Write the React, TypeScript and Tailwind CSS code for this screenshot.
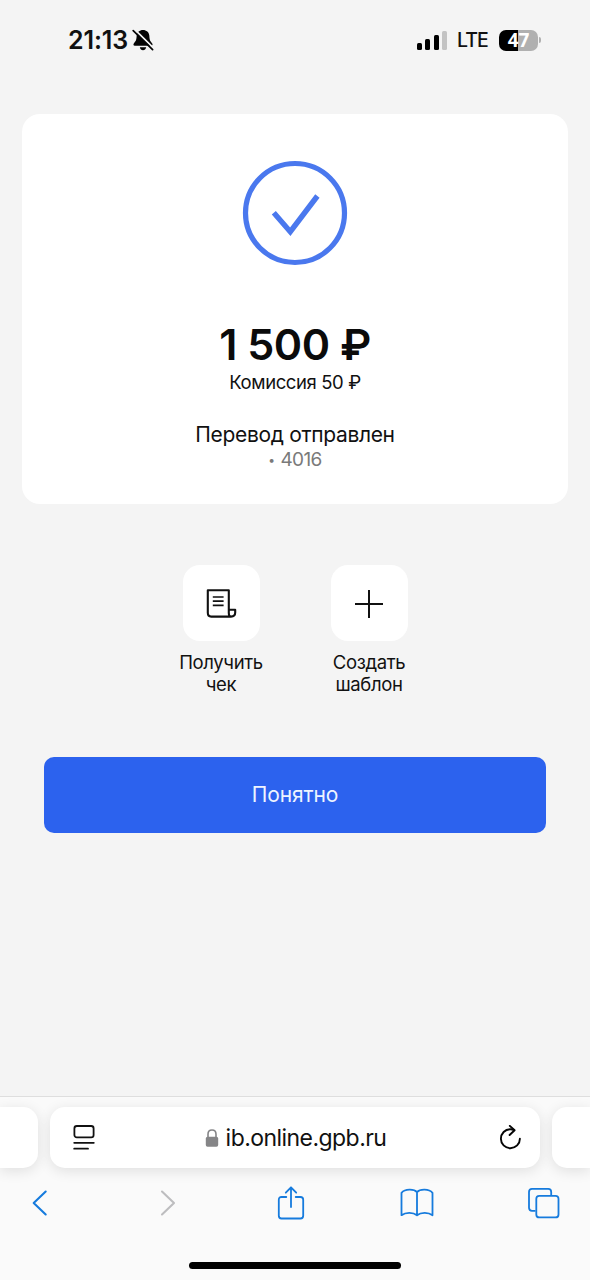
import type { ReactNode } from 'react';

function StatusBar() {
  return (
    <header className="flex h-[80px] items-center justify-between pr-[49px] pl-[68px]">
      <div className="flex items-center gap-[4px]">
        <span className="pt-px text-[25px] leading-none font-semibold tracking-[-0.1px]">21:13</span>
        <svg className="h-[22px] w-[22px]" viewBox="0 0 22 22" aria-hidden="true">
          <path
            d="M11 1C7.6 1 5 3.2 4.7 6.6C4.4 11 4 12 2 14.2C1 15.3 1.4 16.8 2.8 16.8H19.2C20.6 16.8 21 15.3 20 14.2C18 12 17.6 11 17.3 6.6C17 3.2 14.4 1 11 1ZM7.8 18.2H14.2C13.8 20 12.6 21.2 11 21.2C9.4 21.2 8.2 20 7.8 18.2Z"
            fill="#050505"
          />
          <path d="M2.8 0.6L22 19.6" stroke="#f4f4f4" strokeWidth="1.8" />
          <path d="M1.2 1.6L20.6 20.6" stroke="#050505" strokeWidth="1.7" strokeLinecap="round" />
        </svg>
      </div>

      <div className="flex items-center">
        <div className="flex h-[19px] items-end gap-[3.3px]">
          <span className="h-[7px] w-[5px] rounded-[1.5px] bg-black" />
          <span className="h-[11px] w-[5px] rounded-[1.5px] bg-black" />
          <span className="h-[15px] w-[5px] rounded-[1.5px] bg-black" />
          <span className="h-[19px] w-[5px] rounded-[1.5px] bg-[#c3c3c3]" />
        </div>
        <span className="ml-[10px] w-[31px] pt-px text-[19.5px] leading-none font-medium tracking-[-0.9px] whitespace-nowrap">
          LTE
        </span>
        <div className="ml-[11px] flex h-[21px] w-[39px] items-center justify-center rounded-[7px] bg-linear-to-r from-black from-[48%] to-[#b0b0b0] to-[48%] font-['Open_Sans','Noto_Sans',sans-serif] text-[19px] leading-none font-bold text-white">
          47
        </div>
        <span className="ml-[1px] h-[6px] w-[2px] rounded-r-full bg-[#b0b0b0]" />
      </div>
    </header>
  );
}

function ResultCard() {
  return (
    <section className="mx-[22px] mt-[34px] flex h-[390px] flex-col items-center rounded-[18px] bg-white pt-[46px]">
      <svg className="h-[106px] w-[106px]" viewBox="0 0 106 106" fill="none" aria-hidden="true">
        <circle cx="53" cy="53" r="49.5" stroke="#4a78ee" strokeWidth="5.2" />
        <path d="M31.8 52.8L48.3 71.7L75.4 36" stroke="#4a78ee" strokeWidth="5.4" />
      </svg>
      <h1 className="mt-[53px] text-[43px] leading-[50px] font-semibold tracking-[-0.5px] whitespace-nowrap text-[#0b0b0b]">
        1 500 ₽
      </h1>
      <p className="mt-[1px] text-[18.5px] leading-[24px] tracking-[-0.4px] whitespace-nowrap">Комиссия 50 ₽</p>
      <p className="mt-[28px] text-[21px] leading-[26px] tracking-[-0.33px] whitespace-nowrap">Перевод отправлен</p>
      <p className="mt-px flex items-center gap-[6px] text-[19px] leading-[22px] tracking-[-0.6px] text-[#7a7a7a]">
        <span className="text-[12px]">•</span>
        4016
      </p>
    </section>
  );
}

function ActionTile({ icon, children }: { icon: ReactNode; children: ReactNode }) {
  return (
    <button type="button" className="flex w-[148px] flex-col items-center">
      <span className="flex h-[76px] w-[77px] items-center justify-center rounded-[17px] bg-white">{icon}</span>
      <span className="mt-[10px] text-[18.5px] leading-[22px] tracking-[-0.35px]">{children}</span>
    </button>
  );
}

function ReceiptIcon() {
  return (
    <svg className="mt-px h-[32px] w-[32px]" viewBox="0 0 32 32" fill="none" stroke="#111" strokeWidth="2.1" strokeLinejoin="round" aria-hidden="true">
      <path d="M23.8 21.8V2.2H2.8V24.8C2.8 27.2 4.2 28.6 6.2 28.6H26C28.8 28.6 30.2 27 30.2 24.6V21.8H23.8V25C23.8 27 24.8 28.6 26 28.6" />
      <path d="M7.8 9H18.6M7.8 13.1H18.6M7.8 17.3H18.6" strokeWidth="1.7" />
    </svg>
  );
}

function PlusIcon() {
  return (
    <svg className="mt-[2px] h-[28px] w-[28px]" viewBox="0 0 28 28" fill="none" stroke="#111" strokeWidth="2" aria-hidden="true">
      <path d="M14 0V28M0 14H28" />
    </svg>
  );
}

function AddressBar() {
  return (
    <div className="flex gap-[12px] pt-[10px]">
      <div className="h-[61px] w-[38px] shrink-0 rounded-r-[15px] bg-white shadow-[0_3px_14px_rgba(0,0,0,0.11)]" />
      <div className="flex h-[61px] w-[490px] shrink-0 items-center justify-between rounded-[15px] bg-white pr-[18px] pl-[23px] shadow-[0_3px_14px_rgba(0,0,0,0.11)]">
        <svg className="h-[27px] w-[22px]" viewBox="0 0 22 27" fill="none" stroke="#111" strokeWidth="1.8" aria-hidden="true">
          <rect x="1.4" y="2" width="19.2" height="11.4" rx="2.4" />
          <path d="M1.2 18.8H20.8M1.2 24.7H15" strokeLinecap="round" />
        </svg>
        <div className="mr-[2px] flex items-center gap-[7px]">
          <svg className="h-[18px] w-[14px]" viewBox="0 0 14 18" fill="none" aria-hidden="true">
            <path d="M3 9V5.2C3 2.5 4.7 1 7 1C9.3 1 11 2.5 11 5.2V9" stroke="#858587" strokeWidth="1.6" />
            <rect x="0.8" y="7.8" width="12.4" height="10" rx="1.8" fill="#858587" />
          </svg>
          <span className="pt-[2px] text-[23px] leading-none tracking-[-0.55px]">ib.online.gpb.ru</span>
        </div>
        <svg className="h-[26px] w-[24px]" viewBox="0 0 24 26" fill="none" stroke="#050505" strokeWidth="1.9" strokeLinecap="round" strokeLinejoin="round" aria-hidden="true">
          <path d="M16 5C14.8 4.5 13.6 4.2 12.4 4.2C7 4.2 2.9 8.5 2.9 13.8C2.9 19 7 23.2 12.4 23.2C17.7 23.2 21.9 19 21.9 13.8" />
          <path d="M11.8 0.9L16.6 5.3L11.6 10" />
        </svg>
      </div>
      <div className="h-[61px] w-[38px] shrink-0 rounded-l-[15px] bg-white shadow-[0_3px_14px_rgba(0,0,0,0.11)]" />
    </div>
  );
}

function Toolbar() {
  return (
    <nav
      className="flex h-[70px] items-center justify-between pr-[30px] pl-[31px] text-[#167bdd]"
      aria-label="Safari"
    >
      <svg className="h-[28px] w-[18px]" viewBox="0 0 18 28" fill="none" stroke="currentColor" strokeWidth="2.1" strokeLinecap="round" strokeLinejoin="round">
        <path d="M14.7 2.5L2.7 14L14.7 25.5" />
      </svg>
      <svg className="ml-[17px] h-[28px] w-[18px] text-[#bdbdbf]" viewBox="0 0 18 28" fill="none" stroke="currentColor" strokeWidth="2.1" strokeLinecap="round" strokeLinejoin="round">
        <path d="M3 2.5L15 14L3 25.5" />
      </svg>
      <svg className="ml-[7px] h-[36px] w-[28px]" viewBox="0 0 28 36" fill="none" stroke="currentColor" strokeWidth="1.8" strokeLinecap="round" strokeLinejoin="round">
        <path d="M9.3 12H4.5C2.8 12 1.8 13 1.8 14.7V30.8C1.8 32.5 2.8 33.5 4.5 33.5H23.5C25.2 33.5 26.2 32.5 26.2 30.8V14.7C26.2 13 25.2 12 23.5 12H18.7" />
        <path d="M14 22V2.5M8.8 7.7L14 2.3L19.2 7.7" />
      </svg>
      <svg className="ml-[2px] h-[30px] w-[34px]" viewBox="0 0 34 30" fill="none" stroke="currentColor" strokeWidth="1.8" strokeLinejoin="round">
        <path d="M17 4.2C14 0.8 5 0.8 1.5 4.8V27.2C5.5 24.2 13 24 17 27.3C21 24 28.5 24.2 32.5 27.2V4.8C29 0.8 20 0.8 17 4.2ZM17 4.2V27.3" />
      </svg>
      <svg className="h-[32px] w-[33px]" viewBox="0 0 33 32" fill="none" stroke="currentColor" strokeWidth="1.8" strokeLinejoin="round">
        <path d="M8.5 23.8H5C3.1 23.8 2 22.7 2 20.8V4.9C2 3 3.1 1.9 5 1.9H21.2C23.1 1.9 24.2 3 24.2 4.9V8.8" />
        <rect x="9.3" y="8.8" width="22.2" height="21.6" rx="3" />
      </svg>
    </nav>
  );
}

export default function App() {
  return (
    <div className="flex h-[1280px] w-[590px] flex-col overflow-hidden bg-[#f4f4f4] font-['Inter','Liberation_Sans',sans-serif] text-[#111]">
      <StatusBar />

      <main className="flex-1">
        <ResultCard />

        <div className="mt-[61px] flex justify-center">
          <ActionTile icon={<ReceiptIcon />}>
            Получить
            <br />
            чек
          </ActionTile>
          <ActionTile icon={<PlusIcon />}>
            Создать
            <br />
            шаблон
          </ActionTile>
        </div>

        <div className="mt-[62px] px-[44px]">
          <button
            type="button"
            className="h-[76px] w-full rounded-[10px] bg-[#2c62ee] text-[21px] tracking-[-0.1px] text-[#eef4ff]"
          >
            Понятно
          </button>
        </div>
      </main>

      <footer className="h-[184px] border-t border-[#dedede] bg-[#fafafa]">
        <AddressBar />
        <Toolbar />
        <div className="mx-auto mt-[24px] h-[7px] w-[212px] rounded-full bg-black" />
      </footer>
    </div>
  );
}
